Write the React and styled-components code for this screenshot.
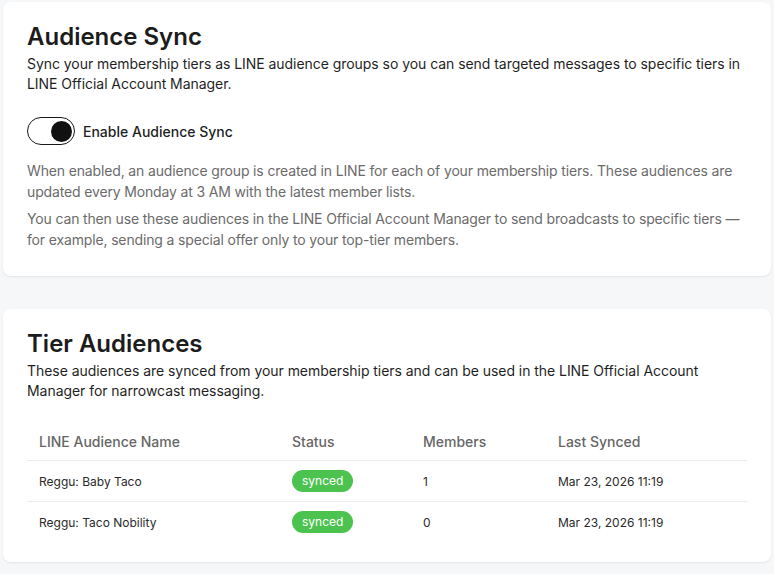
import styled, { createGlobalStyle } from "styled-components";

const Global = createGlobalStyle`
  body {
    margin: 0;
    background: #f6f7f9;
    font-family: Inter, "Noto Sans", sans-serif;
    color: #1f1f1f;
  }
`;

const Page = styled.div`
  display: flex;
  flex-direction: column;
  gap: 33px;
  padding: 2px 3px 5px;
`;

const Card = styled.section`
  background: #fff;
  border-radius: 8px;
  box-shadow: 0 1px 2px rgba(0, 0, 0, 0.08);
  padding: 20px 24px 20px;
`;

const Title = styled.h2`
  margin: 0 0 2px;
  font-size: 24px;
  font-weight: 600;
  line-height: 30px;
  color: #1c1c1c;
`;

const Lead = styled.p`
  margin: 0;
  font-size: 14px;
  line-height: 20px;
  letter-spacing: -0.05px;
  color: #1f1f1f;
`;

const ToggleRow = styled.label`
  display: flex;
  align-items: center;
  gap: 8px;
  margin: 23px 0 15px;
  font-size: 14px;
  font-weight: 500;
`;

const Track = styled.span`
  box-sizing: border-box;
  width: 48px;
  height: 28px;
  border: 1.5px solid #1a1a1a;
  border-radius: 14px;
  display: flex;
  align-items: center;
  justify-content: ${(p) => (p.$on ? "flex-end" : "flex-start")};
  padding: 2px;
`;

const Knob = styled.span`
  width: 21px;
  height: 21px;
  border-radius: 50%;
  background: #111;
`;

const Note = styled.p`
  margin: 0 0 6px;
  font-size: 14px;
  line-height: 21px;
  letter-spacing: -0.15px;
  color: #6b6b6b;
`;

const Table = styled.table`
  width: 100%;
  border-collapse: collapse;
  margin-top: 24px;
`;

const Th = styled.th`
  text-align: left;
  font-size: 14px;
  font-weight: 500;
  color: #666;
  padding: 8px 12px 10px;
  border-bottom: 1px solid #ececec;
`;

const Td = styled.td`
  font-size: 12px;
  color: #2a2a2a;
  padding: 0 12px;
  height: 40px;
  border-bottom: ${(p) => (p.$last ? "none" : "1px solid #ececec")};
`;

const Badge = styled.span`
  display: inline-block;
  background: #4cc24f;
  color: #fff;
  font-size: 12px;
  line-height: 22px;
  padding: 0 10px;
  border-radius: 11px;
`;

const rows = [
  { name: "Reggu: Baby Taco", members: 1 },
  { name: "Reggu: Taco Nobility", members: 0 },
];

export default function App() {
  return (
    <Page>
      <Global />
      <Card>
        <Title>Audience Sync</Title>
        <Lead>
          Sync your membership tiers as LINE audience groups so you can send targeted messages to specific tiers in
          LINE Official Account Manager.
        </Lead>
        <ToggleRow>
          <Track $on>
            <Knob />
          </Track>
          Enable Audience Sync
        </ToggleRow>
        <Note>
          When enabled, an audience group is created in LINE for each of your membership tiers. These audiences are
          updated every Monday at 3 AM with the latest member lists.
        </Note>
        <Note>
          You can then use these audiences in the LINE Official Account Manager to send broadcasts to specific tiers
          — for example, sending a special offer only to your top-tier members.
        </Note>
      </Card>
      <Card>
        <Title>Tier Audiences</Title>
        <Lead>
          These audiences are synced from your membership tiers and can be used in the LINE Official Account
          Manager for narrowcast messaging.
        </Lead>
        <Table>
          <thead>
            <tr>
              <Th style={{ width: 229 }}>LINE Audience Name</Th>
              <Th style={{ width: 107 }}>Status</Th>
              <Th style={{ width: 111 }}>Members</Th>
              <Th>Last Synced</Th>
            </tr>
          </thead>
          <tbody>
            {rows.map((r, i) => {
              const last = i === rows.length - 1;
              return (
                <tr key={r.name}>
                  <Td $last={last}>{r.name}</Td>
                  <Td $last={last}>
                    <Badge>synced</Badge>
                  </Td>
                  <Td $last={last}>{r.members}</Td>
                  <Td $last={last}>Mar 23, 2026 11:19</Td>
                </tr>
              );
            })}
          </tbody>
        </Table>
      </Card>
    </Page>
  );
}
